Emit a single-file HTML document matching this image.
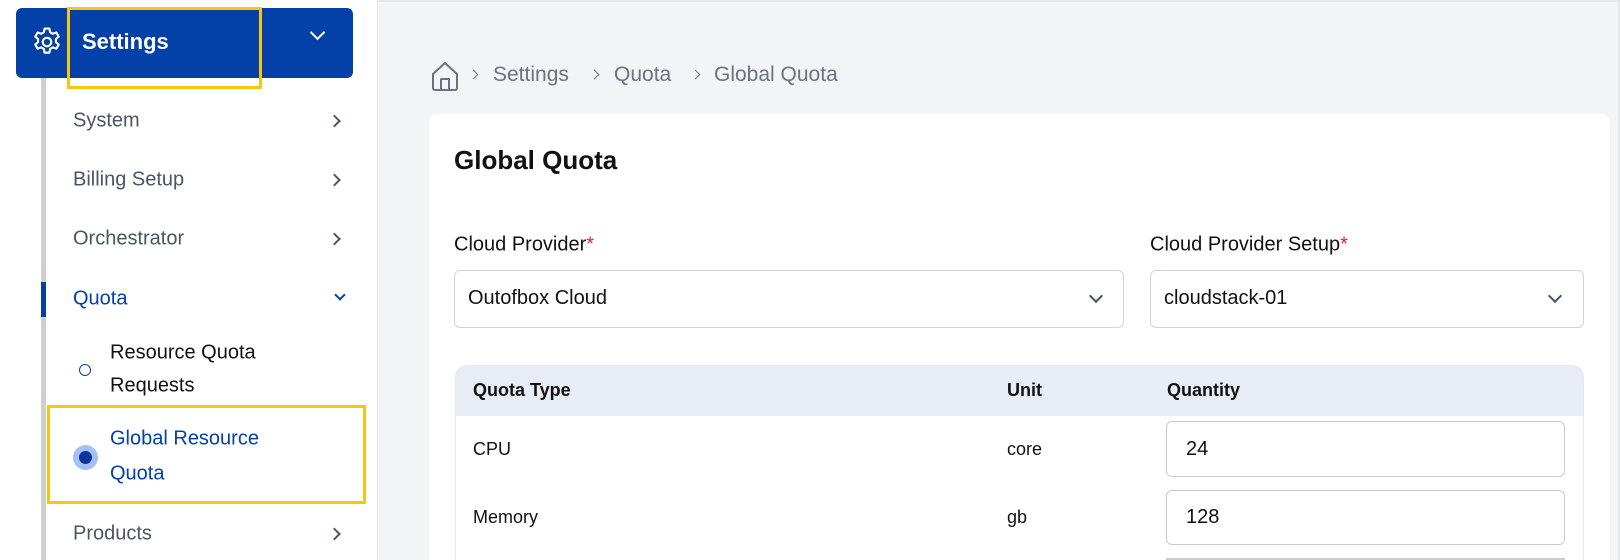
<!DOCTYPE html>
<html style="width:1620px;height:560px;overflow:hidden"><head><meta charset="utf-8"><style>
*{box-sizing:border-box;margin:0;padding:0}
body{width:1620px;height:560px;overflow:hidden;background:#f3f4f6;font-family:"Liberation Sans",sans-serif;position:relative}
.a{position:absolute;white-space:nowrap}
.side{position:absolute;left:0;top:0;width:378px;height:560px;background:#fff;border-right:1px solid #e5e7eb}
.item{position:absolute;left:73px;font-size:20px;color:#4b5563;transform:translateY(-50%)}
.chev{position:absolute;left:336px;width:9px;height:9px;border-right:2px solid #4b5563;border-top:2px solid #4b5563;transform:translateY(-50%) rotate(45deg)}
.lbl{font-size:20px;color:#111;transform:translateY(-50%)}
.sel{position:absolute;background:#fff;border:1px solid #d1d5db;border-radius:6px}
.inp{position:absolute;background:#fff;border:1px solid #c8ccd2;border-radius:6px;font-size:20px;color:#111;padding-left:19px;display:flex;align-items:center}
</style></head><body>
<div class="a" style="left:378px;top:0;width:1242px;height:2px;background:#e5e7eb"></div>
<div class="side">
  <div class="a" style="left:16px;top:8px;width:337px;height:70px;background:#0340a8;border-radius:6px"></div>
  <svg class="a" style="left:30px;top:25px" width="34" height="34" viewBox="0 0 24 24" fill="none" stroke="#fff" stroke-width="1.5" stroke-linejoin="round"><path d="M10.3 2.5h3.4l.5 2.6 1.9 1.1 2.5-.9 1.7 2.9-2 1.7v2.2l2 1.7-1.7 2.9-2.5-.9-1.9 1.1-.5 2.6h-3.4l-.5-2.6-1.9-1.1-2.5.9-1.7-2.9 2-1.7v-2.2l-2-1.7 1.7-2.9 2.5.9 1.9-1.1z"/><circle cx="12" cy="12" r="3"/></svg>
  <div class="a" style="left:82px;top:29px;font-size:22px;font-weight:bold;color:#fff">Settings</div>
  <div class="a" style="left:312px;top:27px;width:11px;height:11px;border-right:2px solid #fff;border-bottom:2px solid #fff;transform:rotate(45deg)"></div>
  <div class="a" style="left:67px;top:7px;width:195px;height:82px;border:3px solid #f9c511"></div>
  <div class="a" style="left:41px;top:78px;width:5px;height:482px;background:#cfcfcf"></div>
  <div class="a" style="left:41px;top:282px;width:5px;height:35px;background:#0340a8"></div>
  <div class="item" style="top:121px">System</div><div class="chev" style="top:121px;margin-left:-6px"></div>
  <div class="item" style="top:180px">Billing Setup</div><div class="chev" style="top:180px;margin-left:-6px"></div>
  <div class="item" style="top:239px">Orchestrator</div><div class="chev" style="top:239px;margin-left:-6px"></div>
  <div class="item" style="top:299px;color:#0340a8">Quota</div>
  <div class="a" style="left:336px;top:291px;width:8px;height:8px;border-right:2px solid #0340a8;border-bottom:2px solid #0340a8;transform:rotate(45deg)"></div>
  <div class="a" style="left:79px;top:364px;width:12px;height:12px;border:1.5px solid #0340a8;border-radius:50%"></div>
  <div class="item" style="left:110px;top:353px;color:#111">Resource Quota</div>
  <div class="item" style="left:110px;top:386px;color:#111">Requests</div>
  <div class="a" style="left:73px;top:445px;width:25px;height:25px;border-radius:50%;background:#a3c0f7"></div>
  <div class="a" style="left:79px;top:451px;width:13px;height:13px;border-radius:50%;background:#0a3596"></div>
  <div class="item" style="left:110px;top:439px;color:#0340a8">Global Resource</div>
  <div class="item" style="left:110px;top:474px;color:#0340a8">Quota</div>
  <div class="a" style="left:47px;top:405px;width:319px;height:99px;border:3px solid #f9c511"></div>
  <div class="item" style="top:534px">Products</div><div class="chev" style="top:534px;margin-left:-6px"></div>
</div>
<svg class="a" style="left:431px;top:61px" width="28" height="30" viewBox="0 0 28 30" fill="none" stroke="#6b7280" stroke-width="2" stroke-linejoin="round"><path d="M2 13L14 2l12 11v14a2 2 0 0 1-2 2H4a2 2 0 0 1-2-2z"/><path d="M10 29V18h8v11"/></svg>
<div class="a" style="left:470px;top:71px;width:7px;height:7px;border-right:1.5px solid #6b7280;border-top:1.5px solid #6b7280;transform:rotate(45deg)"></div>
<div class="a" style="left:493px;top:63px;font-size:21px;color:#6b7280">Settings</div>
<div class="a" style="left:591px;top:71px;width:7px;height:7px;border-right:1.5px solid #6b7280;border-top:1.5px solid #6b7280;transform:rotate(45deg)"></div>
<div class="a" style="left:614px;top:63px;font-size:21px;color:#6b7280">Quota</div>
<div class="a" style="left:692px;top:71px;width:7px;height:7px;border-right:1.5px solid #6b7280;border-top:1.5px solid #6b7280;transform:rotate(45deg)"></div>
<div class="a" style="left:714px;top:63px;font-size:21px;color:#6b7280">Global Quota</div>
<div class="a" style="left:429px;top:114px;width:1181px;height:446px;background:#fff;border-radius:8px 8px 0 0"></div>
<div class="a" style="left:454px;top:145px;font-size:26px;font-weight:bold;color:#111">Global Quota</div>
<div class="a lbl" style="left:454px;top:245px">Cloud Provider<span style="color:#e02424">*</span></div>
<div class="a lbl" style="left:1150px;top:245px">Cloud Provider Setup<span style="color:#e02424">*</span></div>
<div class="sel" style="left:454px;top:270px;width:670px;height:58px"></div>
<div class="a" style="left:468px;top:287px;font-size:20px;color:#111">Outofbox Cloud</div>
<div class="a" style="left:1091px;top:291px;width:10px;height:10px;border-right:2.5px solid #4b5563;border-bottom:2.5px solid #4b5563;transform:rotate(45deg)"></div>
<div class="sel" style="left:1150px;top:270px;width:434px;height:58px"></div>
<div class="a" style="left:1164px;top:287px;font-size:20px;color:#111">cloudstack-01</div>
<div class="a" style="left:1550px;top:291px;width:10px;height:10px;border-right:2.5px solid #4b5563;border-bottom:2.5px solid #4b5563;transform:rotate(45deg)"></div>
<div class="a" style="left:455px;top:365px;width:1129px;height:195px;border:1px solid #e5e7eb;border-bottom:none;border-radius:12px 12px 0 0;background:#fff;overflow:hidden">
  <div style="height:50px;background:#e8ecf4"></div>
</div>
<div class="a" style="left:473px;top:380px;font-size:18px;font-weight:bold;color:#111">Quota Type</div>
<div class="a" style="left:1007px;top:380px;font-size:18px;font-weight:bold;color:#111">Unit</div>
<div class="a" style="left:1167px;top:380px;font-size:18px;font-weight:bold;color:#111">Quantity</div>
<div class="a" style="left:473px;top:439px;font-size:18px;color:#111">CPU</div>
<div class="a" style="left:1007px;top:439px;font-size:18px;color:#111">core</div>
<div class="a" style="left:473px;top:507px;font-size:18px;color:#111">Memory</div>
<div class="a" style="left:1007px;top:507px;font-size:18px;color:#111">gb</div>
<div class="inp" style="left:1166px;top:421px;width:399px;height:56px">24</div>
<div class="inp" style="left:1166px;top:490px;width:399px;height:55px">128</div>
<div class="a" style="left:1166px;top:558px;width:399px;height:2px;background:#c8ccd2"></div>
<div class="a" style="left:1618px;top:0;width:2px;height:560px;background:#e5e7eb"></div>
</body></html>
